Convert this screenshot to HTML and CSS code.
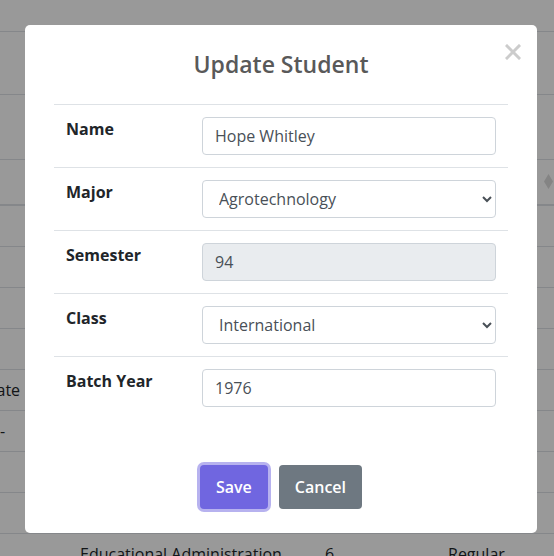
FILE: index.html
```html
<!DOCTYPE html>
<html lang="en">
<head>
<meta charset="utf-8">
<title>Update Student</title>
<link rel="stylesheet" href="styles.css">
</head>
<body>
<div class="page">
  <div class="bg-row bg-top"></div>
  <div class="bg-row bg-controls"></div>
  <div class="bg-row bg-filter"></div>
  <div class="bg-row bg-head">
    <svg class="sort-icon" width="9" height="15" viewBox="0 0 9 15"><polygon points="4.5,0 9,7.5 4.5,15 0,7.5" fill="#dcdcdc"/></svg>
  </div>
  <div class="bg-row bg-data"><div class="cells"><span class="c0"></span><span class="c1"></span><span class="c2"></span><span class="c3"></span></div></div>
  <div class="bg-row bg-data"><div class="cells"><span class="c0"></span><span class="c1"></span><span class="c2"></span><span class="c3"></span></div></div>
  <div class="bg-row bg-data"><div class="cells"><span class="c0"></span><span class="c1"></span><span class="c2"></span><span class="c3"></span></div></div>
  <div class="bg-row bg-data"><div class="cells"><span class="c0"></span><span class="c1"></span><span class="c2"></span><span class="c3"></span></div></div>
  <div class="bg-row bg-data"><div class="cells"><span class="c0">Undergraduate</span><span class="c1"></span><span class="c2"></span><span class="c3"></span></div></div>
  <div class="bg-row bg-data"><div class="cells"><span class="c0 dash">-</span><span class="c1"></span><span class="c2"></span><span class="c3"></span></div></div>
  <div class="bg-row bg-data"><div class="cells"><span class="c0"></span><span class="c1"></span><span class="c2"></span><span class="c3"></span></div></div>
  <div class="bg-row bg-data"><div class="cells"><span class="c0"></span><span class="c1"></span><span class="c2"></span><span class="c3"></span></div></div>
  <div class="bg-row bg-data"><div class="cells"><span class="c0"></span><span class="c1">Educational Administration</span><span class="c2">6</span><span class="c3">Regular</span></div></div>
</div>

<div class="overlay">
  <div class="modal" role="dialog" aria-labelledby="modal-title">
    <button class="close" type="button" aria-label="Close">
      <svg width="16" height="16" viewBox="0 0 16 16"><path d="M2 2 L14 14 M14 2 L2 14" stroke="#cccccc" stroke-width="3" stroke-linecap="square" fill="none"/></svg>
    </button>
    <h2 class="title" id="modal-title">Update Student</h2>
    <table class="form-table">
      <tr><th>Name</th><td><input class="form-control" type="text" value="Hope Whitley"></td></tr>
      <tr><th>Major</th><td><select class="form-control"><option>Agrotechnology</option></select></td></tr>
      <tr><th>Semester</th><td><input class="form-control" type="text" value="94" readonly></td></tr>
      <tr><th>Class</th><td><select class="form-control"><option>International</option></select></td></tr>
      <tr><th>Batch Year</th><td><input class="form-control" type="text" value="1976"></td></tr>
    </table>
    <div class="actions">
      <button class="btn btn-confirm" type="button">Save</button>
      <button class="btn btn-cancel" type="button">Cancel</button>
    </div>
  </div>
</div>
</body>
</html>
```
FILE: styles.css
```css
* { box-sizing: border-box; }

html, body {
  margin: 0;
  padding: 0;
}

body {
  width: 554px;
  height: 556px;
  overflow: hidden;
  background: #ffffff;
  color: #212529;
  font-family: "Open Sans", "Noto Sans", sans-serif;
  font-size: 16px;
}

/* background page */
.bg-row {
  border-bottom: 1px solid #dee2e6;
}
.bg-top { height: 32px; }
.bg-controls { height: 63px; }
.bg-filter { height: 65px; }
.bg-head {
  height: 46px;
  border-bottom: 2px solid #dee2e6;
  display: flex;
  justify-content: flex-end;
  align-items: center;
  padding-right: 1px;
}
.sort-icon { display: block; margin-top: -2px; }

.bg-data {
  height: 41px;
  overflow: hidden;
}
.cells {
  display: flex;
  margin-left: -106px;
  line-height: 24px;
  white-space: nowrap;
}
.cells span {
  display: block;
  flex-shrink: 0;
  padding: 8px 12px;
  min-height: 40px;
}
.c0 { width: 174px; }
.c1 { width: 245px; }
.c2 { width: 123px; }
.c3 { width: 200px; }
.cells .dash { padding-left: 106px; }

/* overlay + modal */
.overlay {
  position: fixed;
  inset: 0;
  background: rgba(0, 0, 0, 0.4);
  padding: 25px 0 0 25px;
}

.modal {
  position: relative;
  width: 512px;
  background: #ffffff;
  border-radius: 5px;
  padding: 23px 29px 24px;
}

.close {
  position: absolute;
  top: 19px;
  right: 16px;
  width: 16px;
  height: 16px;
  padding: 0;
  border: 0;
  background: none;
}
.close svg { display: block; }

.title {
  margin: 0;
  font-size: 23px;
  line-height: 32px;
  font-weight: 600;
  color: #595959;
  text-align: center;
}

.form-table {
  width: 100%;
  margin-top: 24px;
  border-collapse: separate;
  border-spacing: 0;
}
.form-table th,
.form-table td {
  border-top: 1px solid #dee2e6;
  padding: 12px;
  vertical-align: top;
  line-height: 24px;
}
.form-table th {
  width: 136px;
  text-align: left;
  font-weight: 700;
  color: #212529;
}

.form-control {
  display: block;
  width: 100%;
  height: 38px;
  padding: 6px 12px;
  font-family: inherit;
  font-size: 16px;
  line-height: 24px;
  color: #495057;
  background: #ffffff;
  border: 1px solid #ced4da;
  border-radius: 4px;
}
.form-control[readonly] {
  background: #e9ecef;
}

.actions {
  margin-top: 46px;
  display: flex;
  justify-content: center;
  gap: 11px;
}

.btn {
  height: 44px;
  padding: 0 16px;
  border: 0;
  border-radius: 4px;
  color: #ffffff;
  font-family: inherit;
  font-size: 16px;
  font-weight: 600;
}
.btn-confirm {
  background: #7066e0;
  box-shadow: 0 0 0 3px rgba(112, 102, 224, 0.5);
}
.btn-cancel {
  background: #6e7881;
}
```
